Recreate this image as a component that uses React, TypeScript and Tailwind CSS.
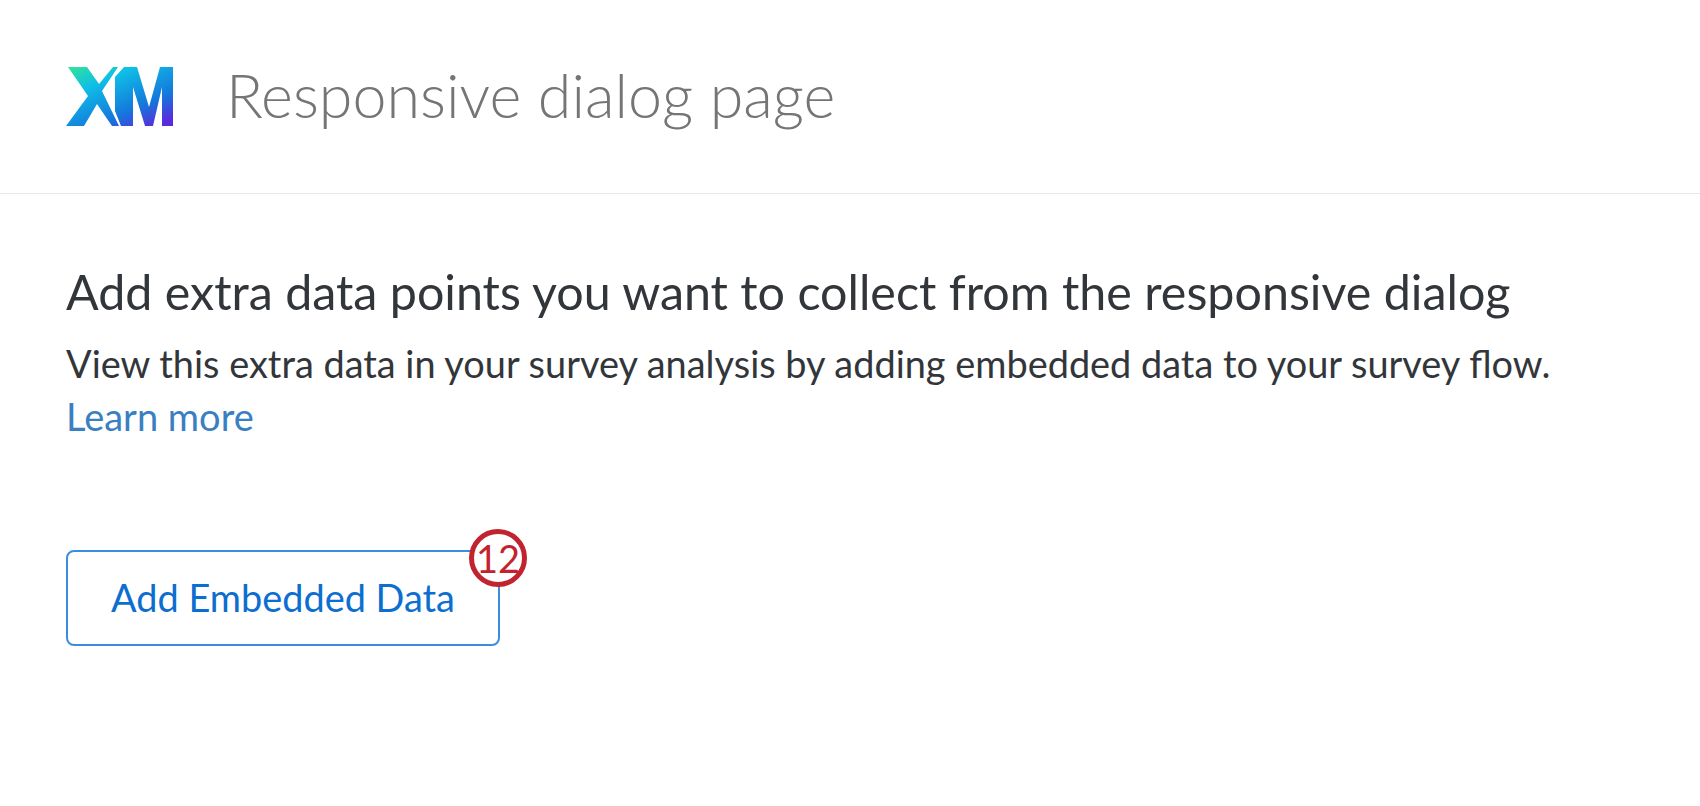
export default function App() {
  return (
    <div className="h-[806px] w-[1700px] overflow-hidden bg-white font-['Lato',sans-serif]">
      <header className="flex h-[194px] items-center border-b border-[#e8e8e8] pl-[66px]">
        <svg width="108" height="60" viewBox="0 0 108 60">
          <defs>
            <linearGradient id="xm" x1="0.05" y1="0" x2="0.85" y2="1">
              <stop offset="0" stopColor="#2fe39a" />
              <stop offset="0.28" stopColor="#0fbfe6" />
              <stop offset="0.72" stopColor="#1477dc" />
              <stop offset="1" stopColor="#5a2bdc" />
            </linearGradient>
          </defs>
          <path
            fill="url(#xm)"
            d="M2 0H21L33 17L47 0H52L36 24L53 59H46L31 37L18 59H0L22 29ZM58 0H71L83 40L94 0H107V59H96V20L87 59H79L67 20V59H55L49 44V10Z"
          />
        </svg>
        <h1 className="mb-[4px] ml-[52px] text-[61px] leading-none font-light text-[#757575]">Responsive dialog page</h1>
      </header>
      <main className="pl-[66px]">
        <h2 className="mt-[68px] text-[48.4px] leading-[58px] text-[#32363a]">
          Add extra data points you want to collect from the responsive dialog
        </h2>
        <p className="mt-[18px] text-[37.9px] leading-[52px] text-[#32363a]">
          View this extra data in your survey analysis by adding embedded data to your survey flow.
        </p>
        <a className="block text-[38px] leading-[52px] text-[#3a7fc1]">Learn more</a>
        <div className="relative mt-[108px] w-[434px]">
          <button className="flex h-[96px] w-full items-center justify-center rounded-[8px] border-2 border-[#3e8ddd] bg-white text-[37.9px] text-[#0b6ed0]">
            Add Embedded Data
          </button>
          <span className="absolute right-[-27px] top-[-21px] flex h-[58px] w-[58px] items-center justify-center rounded-full border-[5px] border-[#c1232f] bg-white text-[38px] leading-none text-[#c1232f]">
            12
          </span>
        </div>
      </main>
    </div>
  )
}
